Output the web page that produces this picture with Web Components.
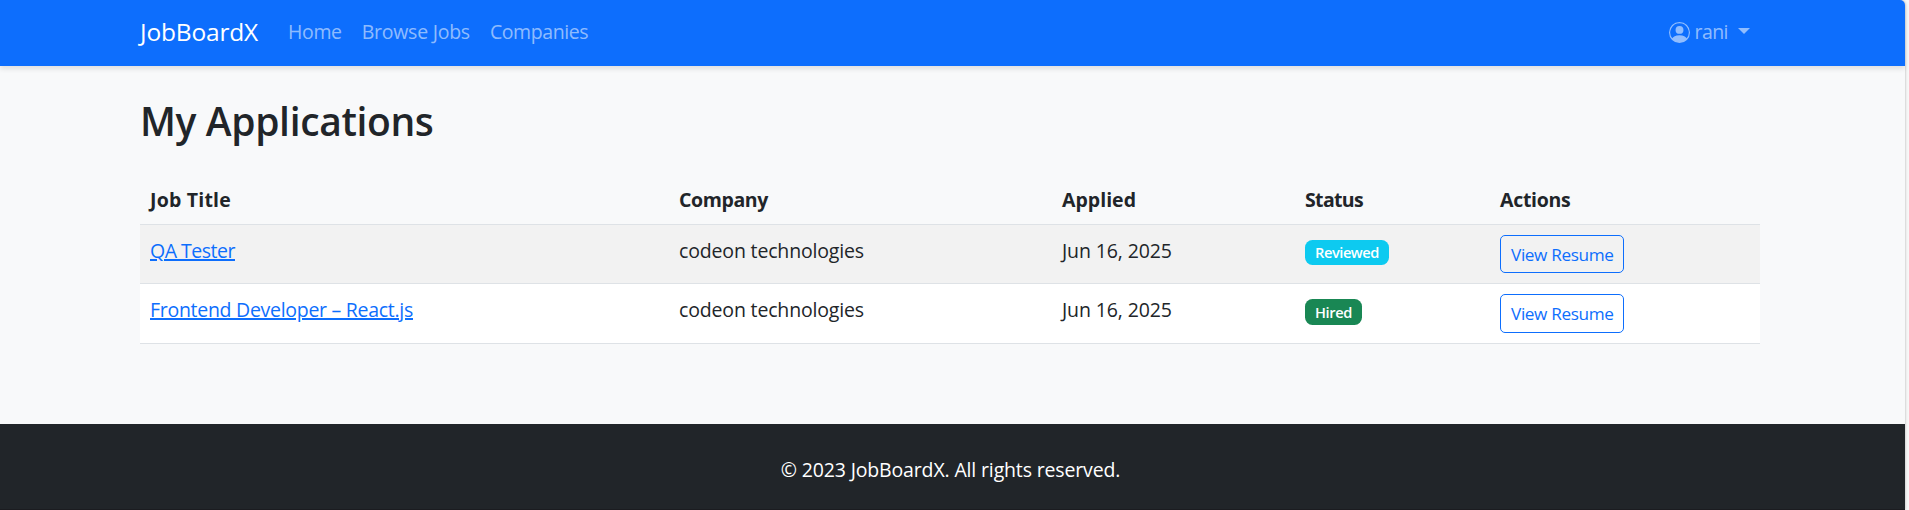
<!DOCTYPE html>
<html lang="en">
<head>
<meta charset="utf-8">
<title>My Applications - JobBoardX</title>
<style>
html, body { margin: 0; height: 100%; overflow: hidden; }
body { background: #f8f8f8; font-family: "Open Sans", "Noto Sans", sans-serif; font-size: 19.5px; line-height: 30px; color: #212529; }
</style>
</head>
<body>
<job-app></job-app>
<script>
const define = (name, html, init) => customElements.define(name, class extends HTMLElement {
  connectedCallback() {
    if (this.shadowRoot) return;
    const t = document.createElement('template');
    t.innerHTML = html;
    this.attachShadow({ mode: 'open' }).append(t.content.cloneNode(true));
    if (init) init(this, this.shadowRoot);
  }
});

/* Label with a fixed advance width: tracking is adjusted to fill it. */
define('fit-text', `<style>
:host { display: inline-block; white-space: pre; }
span { text-decoration: var(--decoration, none); }
</style><span><slot></slot></span>`, (el, root) => {
  const span = root.querySelector('span');
  const w = parseFloat(el.getAttribute('w'));
  const natural = span.getBoundingClientRect().width;
  span.style.letterSpacing = ((w - natural) / el.textContent.length).toFixed(4) + 'px';
  el.style.width = w + 'px';
});

define('nav-link', `<style>
:host { display: block; padding: 0 10px; color: rgba(255,255,255,.55); }
</style><slot></slot>`);

define('user-menu', `<style>
:host { display: flex; align-items: center; color: rgba(255,255,255,.55); }
svg { width: 21px; height: 21px; margin-right: 5px; fill: currentColor; }
i { border: 6px solid transparent; border-top-color: currentColor; border-bottom: 0; margin: -2px 0 0 10px; }
</style>
<svg viewBox="0 0 16 16"><path d="M11 6a3 3 0 1 1-6 0 3 3 0 0 1 6 0"/><path fill-rule="evenodd" d="M0 8a8 8 0 1 1 16 0A8 8 0 0 1 0 8m8-7a7 7 0 0 0-5.468 11.37C3.242 11.226 4.805 10 8 10s4.757 1.225 5.468 2.37A7 7 0 0 0 8 1"/></svg>
<slot></slot><i></i>`);

define('nav-bar', `<style>
:host { display: flex; align-items: center; box-sizing: border-box; height: 66px; padding: 0 155px 2px 140px; background: #0d6efd; border-top-right-radius: 5px; box-shadow: 0 2.5px 5px rgba(0,0,0,.1); position: relative; }
.brand { font-size: 24.5px; color: #fff; margin-right: 20px; }
user-menu { margin-left: auto; }
</style>
<div class="brand"><fit-text w="118.1">JobBoardX</fit-text></div>
<nav-link><fit-text w="53.6">Home</fit-text></nav-link>
<nav-link><fit-text w="108.2">Browse Jobs</fit-text></nav-link>
<nav-link><fit-text w="98.4">Companies</fit-text></nav-link>
<user-menu><fit-text w="33.5">rani</fit-text></user-menu>`);

define('status-badge', `<style>
:host { display: inline-block; box-sizing: border-box; height: 25px; padding: 0 10px; border-radius: 7.5px; background: #0dcaf0; color: #fff; font-size: 14.6px; font-weight: 600; line-height: 25px; vertical-align: top; margin-top: 4px; }
:host([kind=hired]) { background: #198754; height: 26px; line-height: 26px; }
</style><slot></slot>`);

define('outline-button', `<style>
:host { display: block; box-sizing: border-box; width: 124px; height: 38px; margin-top: -1px; padding: 0 10px; border: 1px solid #0d6efd; border-radius: 5px; color: #0d6efd; font-size: 17.2px; line-height: 37px; }
:host([tall]) { height: 39px; }
</style><slot></slot>`);

define('text-link', `<style>
:host { color: #0d6efd; --decoration: underline 2px; text-underline-offset: 1px; }
</style><a><slot></slot></a>`);

define('table-row', `<style>
:host { display: grid; grid-template-columns: 529px 383px 243px 195px 270px; box-sizing: border-box; height: 59px; border-bottom: 1px solid #dee2e6; }
:host([head]) { height: 51px; font-weight: 700; }
:host([striped]) { background: #f2f2f2; }
:host([plain]) { background: #fff; height: 60px; }
::slotted(div) { padding: 11px 10px 9px; }
</style><slot></slot>`);

define('applications-page', `<style>
:host { display: block; padding: 31px 145px 80px 140px; background: #f8f9fa; }
h1 { margin: 0 0 29px; font-size: 39px; line-height: 48px; font-weight: 600; }
</style>
<h1><fit-text w="293.5">My Applications</fit-text></h1>
<table-row head><div><fit-text w="81">Job Title</fit-text></div><div><fit-text w="89">Company</fit-text></div><div><fit-text w="74">Applied</fit-text></div><div><fit-text w="58">Status</fit-text></div><div><fit-text w="70.5">Actions</fit-text></div></table-row>
<table-row striped><div><text-link><fit-text w="85">QA Tester</fit-text></text-link></div><div><fit-text w="185">codeon technologies</fit-text></div><div><fit-text w="109.8">Jun 16, 2025</fit-text></div><div><status-badge><fit-text w="64">Reviewed</fit-text></status-badge></div><div><outline-button><fit-text w="102.5">View Resume</fit-text></outline-button></div></table-row>
<table-row plain><div><text-link><fit-text w="263">Frontend Developer – React.js</fit-text></text-link></div><div><fit-text w="185">codeon technologies</fit-text></div><div><fit-text w="109.8">Jun 16, 2025</fit-text></div><div><status-badge kind="hired"><fit-text w="37">Hired</fit-text></status-badge></div><div><outline-button tall><fit-text w="102.5">View Resume</fit-text></outline-button></div></table-row>`);

define('page-footer', `<style>
:host { display: block; box-sizing: border-box; height: 86px; padding: 31px 4px 0 0; background: #212529; color: #fff; text-align: center; border-bottom: 1px solid #1b1c20; }
</style><fit-text w="339.5">© 2023 JobBoardX. All rights reserved.</fit-text>`);

define('job-app', `<style>
:host { display: block; width: 1905px; height: 510px; border-top-right-radius: 5px; box-shadow: 0 0 3px rgba(0,0,0,.3); }
</style><nav-bar></nav-bar><applications-page></applications-page><page-footer></page-footer>`);
</script>
</body>
</html>
